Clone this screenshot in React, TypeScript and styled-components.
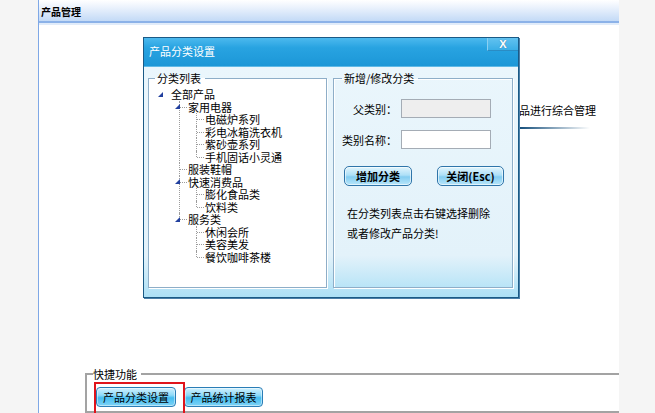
import React from 'react';
import styled, { createGlobalStyle } from 'styled-components';

type TreeNodeData = { label: string; children?: TreeNodeData[] };

const categories: TreeNodeData[] = [
  {
    label: '全部产品',
    children: [
      {
        label: '家用电器',
        children: [
          { label: '电磁炉系列' },
          { label: '彩电冰箱洗衣机' },
          { label: '紫砂壶系列' },
          { label: '手机固话小灵通' },
        ],
      },
      { label: '服装鞋帽' },
      {
        label: '快速消费品',
        children: [{ label: '膨化食品类' }, { label: '饮料类' }],
      },
      {
        label: '服务类',
        children: [{ label: '休闲会所' }, { label: '美容美发' }, { label: '餐饮咖啡茶楼' }],
      },
    ],
  },
];

const GlobalStyle = createGlobalStyle`
  html, body {
    margin: 0;
    padding: 0;
  }
  body {
    font-family: "Noto Sans CJK SC", "Liberation Sans", sans-serif;
    font-size: 11px;
    color: #000;
    background: #f5f5f5;
  }
`;

const Page = styled.div`
  position: relative;
  display: flex;
  width: 655px;
  height: 413px;
  overflow: hidden;
  background: #f5f5f5;
`;

const Gutter = styled.div<{ $left?: boolean }>`
  flex: ${(p) => (p.$left ? '0 0 38px' : '1 1 auto')};
  background: #f5f5f5;
  border-right: ${(p) => (p.$left ? '1px solid #7fa8e6' : 'none')};
`;

const Main = styled.div`
  flex: 0 0 580px;
  display: flex;
  flex-direction: column;
  align-items: flex-start;
  background: #fff;
  overflow: hidden;
`;

const Header = styled.div`
  align-self: stretch;
  height: 19px;
  padding: 2px 0 0 2px;
  line-height: 19px;
  font-size: 10px;
  font-weight: bold;
  background: linear-gradient(to bottom, #ffffff 0%, #eef4fd 30%, #c3daf6 100%);
  border-bottom: 2px solid #8cb2e8;
  box-shadow: 0 2px 0 #e1ecfa;
`;

const Intro = styled.div`
  margin-top: 80px;
  padding-left: 392px;
  line-height: 14px;
  white-space: nowrap;
`;

const IntroRule = styled.div`
  margin: 10px 0 0 361px;
  width: 190px;
  height: 2px;
  background: linear-gradient(to right, #0f4a78 0%, #0f4a78 62%, rgba(255, 255, 255, 0) 100%);
`;

const Shortcuts = styled.fieldset`
  box-sizing: border-box;
  width: 640px;
  height: 60px;
  margin: 238px 0 0 46px;
  padding: 0 6px;
  min-inline-size: 0;
  border: 2px solid #a3a3a3;
  border-right: none;
`;

const ShortcutsLegend = styled.legend`
  padding: 0 4px 0 0;
  line-height: 14px;
`;

const ShortcutRow = styled.div`
  display: flex;
  gap: 8px;
  margin: 6px 0 0 3px;
`;

const Highlight = styled.div`
  position: relative;
  &::after {
    content: '';
    position: absolute;
    left: -2px;
    top: -5px;
    width: 87px;
    height: 40px;
    border: 2px solid #e0141b;
    pointer-events: none;
  }
`;

const ShortcutButton = styled.button<{ $w: number }>`
  width: ${(p) => p.$w}px;
  height: 20px;
  padding: 0;
  font: inherit;
  color: #000;
  border: 1px solid #2a7db6;
  border-radius: 4px;
  background: linear-gradient(to bottom, #d2f1fe 0%, #8fdaf8 40%, #45bdf0 55%, #7fd3f6 100%);
  box-shadow: inset 0 0 0 1px rgba(255, 255, 255, 0.45);
  cursor: pointer;
`;

/* dialog */

const Dialog = styled.div`
  position: absolute;
  left: 143px;
  top: 37px;
  width: 374px;
  height: 259px;
  display: flex;
  flex-direction: column;
  border: 1px solid #1a5a86;
  box-shadow: 1px 1px 0 #4a7fa8;
`;

const TitleBar = styled.div`
  position: relative;
  height: 28px;
  padding-left: 5px;
  line-height: 27px;
  color: #fff;
  background: linear-gradient(to bottom, #4cb9ee 0%, #28a3e1 35%, #1c97d7 100%);
  border-bottom: 1px solid #5fb9e6;
`;

const CloseButton = styled.div`
  position: absolute;
  right: 0;
  top: 0;
  width: 30px;
  height: 12px;
  line-height: 12px;
  text-align: center;
  font-family: "Liberation Sans", sans-serif;
  font-weight: bold;
  font-size: 11px;
  color: #fff;
  background: linear-gradient(to bottom, #62c2f0, #3aaee6);
  border-left: 1px solid #8ad0f2;
  border-bottom: 1px solid #2a8cc4;
  text-shadow: 0 0 1px #3a6f96;
`;

const DialogBody = styled.div`
  flex: 1;
  display: grid;
  grid-template-columns: 179px 180px;
  column-gap: 6px;
  padding: 4px 5px 9px 4px;
  background: linear-gradient(to bottom, #eaf6fc 0%, #e3f2fa 82%, #ace0f6 100%);
`;

const Group = styled.fieldset<{ $white?: boolean }>`
  margin: 0;
  padding: 0 0 0 ${(p) => (p.$white ? 9 : 8)}px;
  min-inline-size: 0;
  border: 1px solid #8eaec8;
  box-shadow: inset 1px 1px 0 #fff, 1px 1px 0 #fff;
  background: ${(p) => (p.$white ? '#fff' : 'transparent')};
`;

const GroupLegend = styled.legend<{ $shift?: number }>`
  margin-left: ${(p) => p.$shift ?? 0}px;
  padding: 0 4px 0 2px;
  line-height: 14px;
`;

const TreeList = styled.ul`
  list-style: none;
  margin: 0;
  padding: 0;
`;

const TreeRoot = styled(TreeList)`
  margin-top: 3px;
`;

const TreeItem = styled.li<{ $level: number; $last: boolean }>`
  position: relative;
  margin-left: ${(p) => (p.$level > 0 ? 17 : 0)}px;
  &::before {
    content: '';
    display: ${(p) => (p.$level > 0 ? 'block' : 'none')};
    position: absolute;
    left: 4px;
    top: 0;
    height: ${(p) => (p.$last ? '6px' : '100%')};
    border-left: 1px dotted #9c9c9c;
  }
  &::after {
    content: '';
    display: ${(p) => (p.$level > 0 ? 'block' : 'none')};
    position: absolute;
    left: 5px;
    top: 6px;
    width: 7px;
    border-top: 1px dotted #9c9c9c;
  }
`;

const TreeRow = styled.div`
  position: relative;
  z-index: 1;
  display: flex;
  align-items: center;
  height: 12.5px;
  line-height: 12.5px;
  white-space: nowrap;
`;

const Toggle = styled.span`
  flex: 0 0 13px;
  height: 100%;
  display: flex;
  align-items: center;
`;

const Expanded = styled.span`
  width: 0;
  height: 0;
  border-bottom: 5px solid #22409e;
  border-left: 5px solid transparent;
`;

const FormGrid = styled.div`
  display: grid;
  grid-template-columns: 55px 90px;
  column-gap: 4px;
  row-gap: 12px;
  align-items: center;
  margin-top: 14px;
`;

const Label = styled.label`
  text-align: right;
  white-space: nowrap;
`;

const TextInput = styled.input`
  box-sizing: border-box;
  width: 90px;
  height: 19px;
  padding: 0 3px;
  font: inherit;
  border: 1px solid #a4acb5;
  background: #fff;
  &:disabled {
    background: #eeeeee;
  }
`;

const ActionRow = styled.div`
  display: flex;
  gap: 25px;
  margin: 17px 0 0 2px;
`;

const ActionButton = styled.button<{ $w: number }>`
  width: ${(p) => p.$w}px;
  height: 20px;
  padding: 0;
  font: inherit;
  font-weight: bold;
  color: #000;
  border: 1px solid #2f75aa;
  border-radius: 5px;
  background: linear-gradient(to bottom, #e2f5fd 0%, #aee0f7 45%, #84cdf1 55%, #b8e6fa 100%);
  box-shadow: inset 0 0 0 1px rgba(255, 255, 255, 0.6);
  cursor: pointer;
`;

const Hint = styled.p`
  margin: 17px 0 0 5px;
  line-height: 20px;
`;

const TreeNode: React.FC<{ node: TreeNodeData; level: number; last: boolean }> = ({
  node,
  level,
  last,
}) => {
  const kids = node.children || [];
  return (
    <TreeItem $level={level} $last={last}>
      <TreeRow>
        <Toggle>{kids.length > 0 && <Expanded />}</Toggle>
        {node.label}
      </TreeRow>
      {kids.length > 0 && (
        <TreeList>
          {kids.map((c, i) => (
            <TreeNode key={c.label} node={c} level={level + 1} last={i === kids.length - 1} />
          ))}
        </TreeList>
      )}
    </TreeItem>
  );
};

const App: React.FC = () => {
  return (
    <>
      <GlobalStyle />
      <Page>
        <Gutter $left />
        <Main>
          <Header>产品管理</Header>
          <Intro>您可以在这里对产品进行综合管理</Intro>
          <IntroRule />
          <Shortcuts>
            <ShortcutsLegend>快捷功能</ShortcutsLegend>
            <ShortcutRow>
              <Highlight>
                <ShortcutButton $w={80}>产品分类设置</ShortcutButton>
              </Highlight>
              <ShortcutButton $w={79}>产品统计报表</ShortcutButton>
            </ShortcutRow>
          </Shortcuts>
        </Main>
        <Gutter />

        <Dialog>
          <TitleBar>
            产品分类设置
            <CloseButton>X</CloseButton>
          </TitleBar>
          <DialogBody>
            <Group $white>
              <GroupLegend $shift={-3}>分类列表</GroupLegend>
              <TreeRoot>
                {categories.map((n, i) => (
                  <TreeNode key={n.label} node={n} level={0} last={i === categories.length - 1} />
                ))}
              </TreeRoot>
            </Group>
            <Group>
              <GroupLegend>新增/修改分类</GroupLegend>
              <FormGrid>
                <Label>父类别：</Label>
                <TextInput disabled />
                <Label>类别名称：</Label>
                <TextInput />
              </FormGrid>
              <ActionRow>
                <ActionButton $w={68}>增加分类</ActionButton>
                <ActionButton $w={67}>关闭(Esc)</ActionButton>
              </ActionRow>
              <Hint>
                在分类列表点击右键选择删除
                <br />
                或者修改产品分类!
              </Hint>
            </Group>
          </DialogBody>
        </Dialog>
      </Page>
    </>
  );
};

export default App;
